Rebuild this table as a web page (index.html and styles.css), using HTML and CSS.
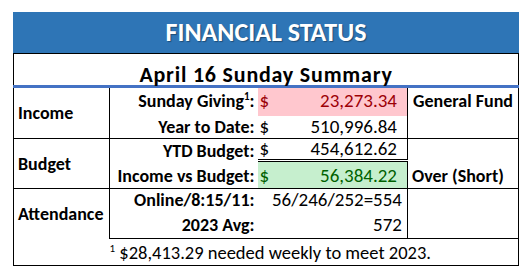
FILE: index.html
```html
<!DOCTYPE html>
<html lang="en">
<head>
    <meta charset="UTF-8">
    <title>Financial Status</title>
    <link rel="stylesheet" href="styles.css">
</head>
<body>
    <table class="status">
        <colgroup>
            <col class="c-cat">
            <col class="c-label">
            <col class="c-value">
            <col class="c-note">
        </colgroup>
        <tr class="r-head">
            <th colspan="4">FINANCIAL STATUS</th>
        </tr>
        <tr class="r-title">
            <th colspan="4">April 16 Sunday Summary</th>
        </tr>

        <!-- Income -->
        <tr class="r-giving">
            <td class="cat" rowspan="2">Income</td>
            <td class="label">Sunday Giving<sup>1</sup>:</td>
            <td class="value bad"><div class="acct"><span>$</span><span>23,273.34</span></div></td>
            <td class="note center">General Fund</td>
        </tr>
        <tr class="r-ytd end">
            <td class="label">Year to Date:</td>
            <td class="value"><div class="acct"><span>$</span><span>510,996.84</span></div></td>
            <td class="note"></td>
        </tr>

        <!-- Budget -->
        <tr class="r-budget">
            <td class="cat" rowspan="2">Budget</td>
            <td class="label">YTD Budget:</td>
            <td class="value total"><div class="acct"><span>$</span><span>454,612.62</span></div></td>
            <td class="note"></td>
        </tr>
        <tr class="r-vs end">
            <td class="label">Income vs Budget:</td>
            <td class="value good"><div class="acct"><span>$</span><span>56,384.22</span></div></td>
            <td class="note">Over (Short)</td>
        </tr>

        <!-- Attendance -->
        <tr class="r-online">
            <td class="cat open" rowspan="2">Attendance</td>
            <td class="label">Online/8:15/11:</td>
            <td class="value num">56/246/252=554</td>
            <td class="note"></td>
        </tr>
        <tr class="r-avg end">
            <td class="label">2023 Avg:</td>
            <td class="value num">572</td>
            <td class="note"></td>
        </tr>

        <tr class="r-foot">
            <td class="blank"></td>
            <td class="foot" colspan="3"><sup>1</sup> $28,413.29 needed weekly to meet 2023.</td>
        </tr>
    </table>
</body>
</html>
```

FILE: styles.css
```css
body {
    margin: 0;
    font-family: Carlito, Calibri, Lato, sans-serif;
    color: #000;
}
.status {
    border-collapse: collapse;
    table-layout: fixed;
    width: 505px;
    margin: 12px 0 0 13px;
    border: 1px solid #000;
}
.c-cat { width: 96px; }
.c-label { width: 148px; }
.c-value { width: 150px; }
.c-note { width: 111px; }

th, td {
    padding: 0;
    line-height: 20px;
    font-size: 18px;
    vertical-align: bottom;
    white-space: nowrap;
}

/* header rows */
.r-head th {
    height: 38px;
    padding-bottom: 2px;
    background-color: #2e75b6;
    color: #fff;
    font-size: 26px;
    font-weight: bold;
    vertical-align: middle;
    text-shadow: 1px 1px 1px rgba(0, 0, 0, 0.35);
    border: 1px solid #2e75b6;
    border-bottom: 1px solid #000;
}
.r-title th {
    height: 31px;
    font-size: 22px;
    font-weight: bold;
    letter-spacing: 0.8px;
    border-bottom: 3px solid #4472c4;
}

/* body rows */
.cat {
    font-weight: bold;
    vertical-align: middle;
    padding-left: 4px;
    border-right: 1px solid #000;
    border-bottom: 1px solid #000;
}
.cat.open {
    border-bottom: 0;
}
.label {
    font-weight: bold;
    text-align: right;
    padding-right: 3px;
}
.label sup,
.foot sup {
    font-size: 11px;
    line-height: 0;
    vertical-align: 7px;
}
.value {
    font-size: 19px;
    border-right: 1px solid #000;
}
.acct {
    display: flex;
    justify-content: space-between;
    padding: 0 10px 0 2px;
}
.num {
    text-align: right;
    padding-right: 5px;
}
.note {
    font-weight: bold;
    padding-left: 4px;
}
.center {
    text-align: center;
    padding-left: 0;
}
.end td {
    border-bottom: 1px solid #000;
}

.bad {
    background-color: #ffc7ce;
    color: #9c0006;
}
.good {
    background-color: #c6efce;
    color: #006100;
}
.total {
    border-bottom: 3px double #000;
}

.r-giving td { height: 23px; padding-bottom: 5px; }
.r-ytd td { height: 21px; padding-bottom: 1px; }
.r-budget td { height: 20px; padding-bottom: 0; }
.r-vs td { height: 24px; padding-bottom: 2px; }
.r-online td { height: 21px; padding-bottom: 3px; }
.r-avg td { height: 22px; padding-bottom: 3px; }
.r-giving .cat, .r-budget .cat, .r-online .cat { padding-bottom: 0; }

.r-foot td { height: 24px; padding-bottom: 2px; }
.blank {
    border-top: 0;
}
.foot {
    font-size: 18.5px;
    border-top: 1px solid #000;
    padding-left: 0;
}
```
